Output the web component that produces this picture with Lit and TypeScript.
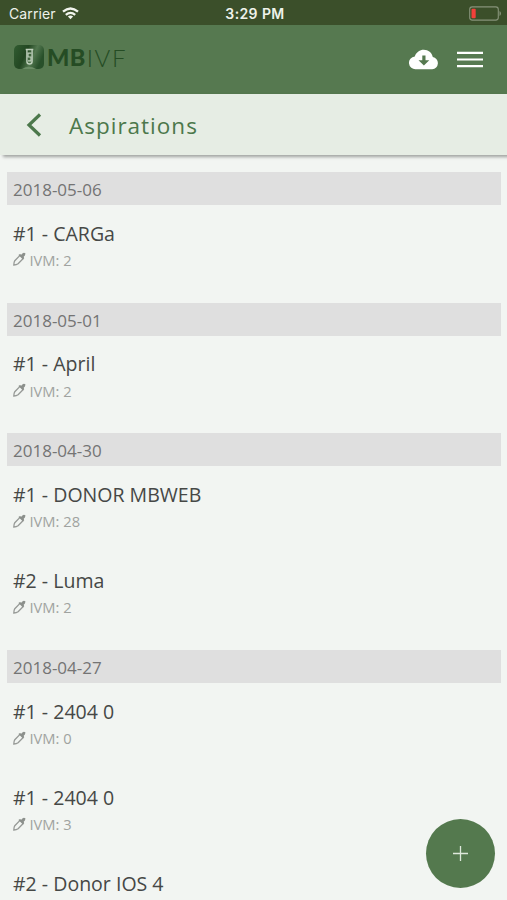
import { LitElement, html, css, nothing } from "lit";
import { customElement } from "lit/decorators.js";

interface Aspiration {
  title: string;
  ivm?: number;
}
interface Day {
  date: string;
  items: Aspiration[];
}

const DAYS: Day[] = [
  { date: "2018-05-06", items: [{ title: "#1 - CARGa", ivm: 2 }] },
  { date: "2018-05-01", items: [{ title: "#1 - April", ivm: 2 }] },
  {
    date: "2018-04-30",
    items: [
      { title: "#1 - DONOR MBWEB", ivm: 28 },
      { title: "#2 - Luma", ivm: 2 },
    ],
  },
  {
    date: "2018-04-27",
    items: [
      { title: "#1 - 2404 0", ivm: 0 },
      { title: "#1 - 2404 0", ivm: 3 },
      { title: "#2 - Donor IOS 4" },
    ],
  },
];

@customElement("status-bar")
class StatusBar extends LitElement {
  static styles = css`
    :host {
      display: grid;
      grid-template-columns: 1fr auto 1fr;
      align-items: center;
      box-sizing: border-box;
      height: 25px;
      padding: 2px 6px 0 9px;
      background: #3b4f2a;
      color: #eef2ea;
      font: 14px/22px Inter, sans-serif;
    }
    .carrier { display: flex; align-items: center; gap: 6px; }
    .name { font-size: 14px; letter-spacing: 0.1px; }
    .time { font-size: 14px; font-weight: 600; letter-spacing: 0.4px; }
    .battery { justify-self: end; display: block; }
    svg { display: block; }
  `;
  render() {
    return html`
      <div class="carrier">
        <span class="name">Carrier</span>
        <svg width="17" height="13" viewBox="0 0 17 13" fill="none" stroke="#f2f5ee" stroke-width="2.3">
          <path d="M1 4.7Q8.5-1.7 16 4.7" />
          <path d="M3.8 7.8Q8.5 3.9 13.2 7.8" />
          <path d="M5.9 9.6Q8.5 7.4 11.1 9.6L8.5 12.3Z" fill="#f2f5ee" stroke="none" />
        </svg>
      </div>
      <span class="time">3:29 PM</span>
      <svg class="battery" width="32" height="15" viewBox="0 0 32 15">
        <rect x="0.7" y="0.9" width="28.6" height="13.2" rx="2.6" fill="none" stroke="#87937a" stroke-width="1.1" />
        <rect x="2.5" y="2.8" width="4.2" height="9.5" rx="1" fill="#f2403a" />
        <path d="M30.5 5v5q1.5-.6 1.5-2.5T30.5 5Z" fill="#87937a" />
      </svg>
    `;
  }
}

@customElement("app-header")
class AppHeader extends LitElement {
  static styles = css`
    :host {
      display: flex;
      align-items: flex-start;
      justify-content: space-between;
      box-sizing: border-box;
      height: 69px;
      padding: 18px 24px 0 13px;
      background: #567950;
    }
    .logo { display: flex; align-items: center; height: 28px; color: #254c24; font: 25px/27px Lato, sans-serif; }
    .mark { margin-right: 2px; }
    .bold { font-weight: 900; font-size: 23.5px; letter-spacing: 0.4px; }
    .thin { font-weight: 300; font-size: 24px; letter-spacing: 1.6px; margin-left: 1px; }
    .actions { display: flex; align-items: center; gap: 19px; padding-top: 6px; }
    svg { display: block; }
  `;
  render() {
    return html`
      <div class="logo">
        <svg class="mark" width="32" height="27" viewBox="0 0 32 27">
          <defs>
            <linearGradient id="shade" x1="0" x2="1" y1="0" y2=".35">
              <stop offset="0" stop-color="#315c31" />
              <stop offset=".45" stop-color="#234722" />
              <stop offset=".72" stop-color="#52774f" />
              <stop offset="1" stop-color="#28502a" />
            </linearGradient>
          </defs>
          <rect x="1" y="1" width="30" height="24" rx="5" fill="url(#shade)" />
          <path d="M9 25Q16 20.5 23 25Z" fill="#6b8d66" />
          <path d="M12.700 5.500h7.600M13.900 6v11.500q0 2.500 2.600 2.500t2.600-2.500V6" fill="none" stroke="#bfd0bc" stroke-width="1.4" />
          <path d="M18.500 9.200H15v3.800h3v3.800h-3" fill="none" stroke="#bfd0bc" stroke-width="1.2" />
        </svg>
        <span class="bold">MB</span><span class="thin">IVF</span>
      </div>
      <div class="actions">
        <svg width="29" height="21" viewBox="0 0 29 21">
          <path
            d="M7 20.200A6.300 6.300 0 0 1 5.800 7.400C7.400 3.200 10.800.8 14.700.8c4.800 0 8.200 3 9.100 7.300A6.100 6.100 0 0 1 23.200 20.200Z"
            fill="#fff"
          />
          <path d="M13.300 6.500h3.200v4.700h3.800l-5.400 5.400-5.400-5.400h3.800Z" fill="#567950" />
        </svg>
        <svg width="26" height="17" viewBox="0 0 26 17">
          <path d="M0 1.900h26M0 8.500h26M0 15.100h26" stroke="#fff" stroke-width="2.2" />
        </svg>
      </div>
    `;
  }
}

@customElement("aspiration-row")
class AspirationRow extends LitElement {
  static properties = { item: { attribute: false } };
  declare item: Aspiration;
  static styles = css`
    :host { display: block; box-sizing: border-box; height: 86px; padding: 14.6px 0 0 6px; }
    .title { font-size: 19.55px; line-height: 28px; color: #464846; }
    .meta {
      display: flex;
      align-items: center;
      gap: 3.5px;
      margin-top: 0.4px;
      font-size: 14.7px;
      line-height: 24px;
      color: #a0a3a0;
    }
    svg { display: block; margin-bottom: 1px; }
  `;
  render() {
    return html`
      <div class="title">${this.item.title}</div>
      ${this.item.ivm === undefined
        ? nothing
        : html`<div class="meta">
            <svg width="13" height="14" viewBox="0 0 13 14">
              <path d="M7 3.400 1.800 8.700Q.8 10.400.8 13q2.700 0 4.300-1.200L10.200 6.500" fill="none" stroke="#979a97" stroke-width="1.3" />
              <path d="M5.400 2.900 7 1.900l1.200.9 1.500-1.600q1.500-.9 2.800.4l-.6 1.800-1.200 1.300.5 1.600-1.200 1.300Z" fill="#8c908c" />
            </svg>
            <span>IVM: ${this.item.ivm}</span>
          </div>`}
    `;
  }
}

@customElement("app-root")
class AppRoot extends LitElement {
  static styles = css`
    :host {
      display: flex;
      flex-direction: column;
      position: relative;
      height: 900px;
      overflow: hidden;
      background: #f2f5f2;
      font-family: "Open Sans", sans-serif;
    }
    status-bar, app-header, .titlebar { flex: none; }
    .titlebar {
      z-index: 1;
      display: flex;
      align-items: center;
      box-sizing: border-box;
      height: 61px;
      padding: 1px 0 0 26px;
      gap: 27px;
      background: #e6ede4;
      box-shadow: 3px 2px 3px rgba(0, 0, 0, 0.34);
      color: #4c784b;
      font-size: 22.5px;
      letter-spacing: 1px;
    }
    .list { flex: 1; min-height: 0; overflow: hidden; padding: 17px 6px 0 7px; }
    .day { margin-bottom: 11.7px; }
    .date {
      box-sizing: border-box;
      height: 33px;
      padding: 2px 6px 0;
      background: #dfdfdf;
      color: #747474;
      font-size: 17px;
      line-height: 32px;
    }
    .add {
      position: absolute;
      z-index: 2;
      right: 12px;
      bottom: 12px;
      display: grid;
      place-items: center;
      width: 69px;
      height: 69px;
      padding: 0;
      border: 0;
      border-radius: 50%;
      background: #54794e;
    }
    svg { display: block; }
  `;
  render() {
    return html`
      <status-bar></status-bar>
      <app-header></app-header>
      <div class="titlebar">
        <svg width="16" height="24" viewBox="0 0 16 24">
          <path d="M14 1.500 3 12l11 10.500" fill="none" stroke="#4c784b" stroke-width="3.2" />
        </svg>
        <span>Aspirations</span>
      </div>
      <div class="list">
        ${DAYS.map(
          (day) => html`
            <section class="day">
              <div class="date">${day.date}</div>
              ${day.items.map((item) => html`<aspiration-row .item=${item}></aspiration-row>`)}
            </section>
          `
        )}
      </div>
      <button class="add" aria-label="Add">
        <svg width="15" height="15" viewBox="0 0 15 15">
          <path d="M7.500 0v15M0 7.500h15" stroke="#dde8db" stroke-width="1.3" />
        </svg>
      </button>
    `;
  }
}
